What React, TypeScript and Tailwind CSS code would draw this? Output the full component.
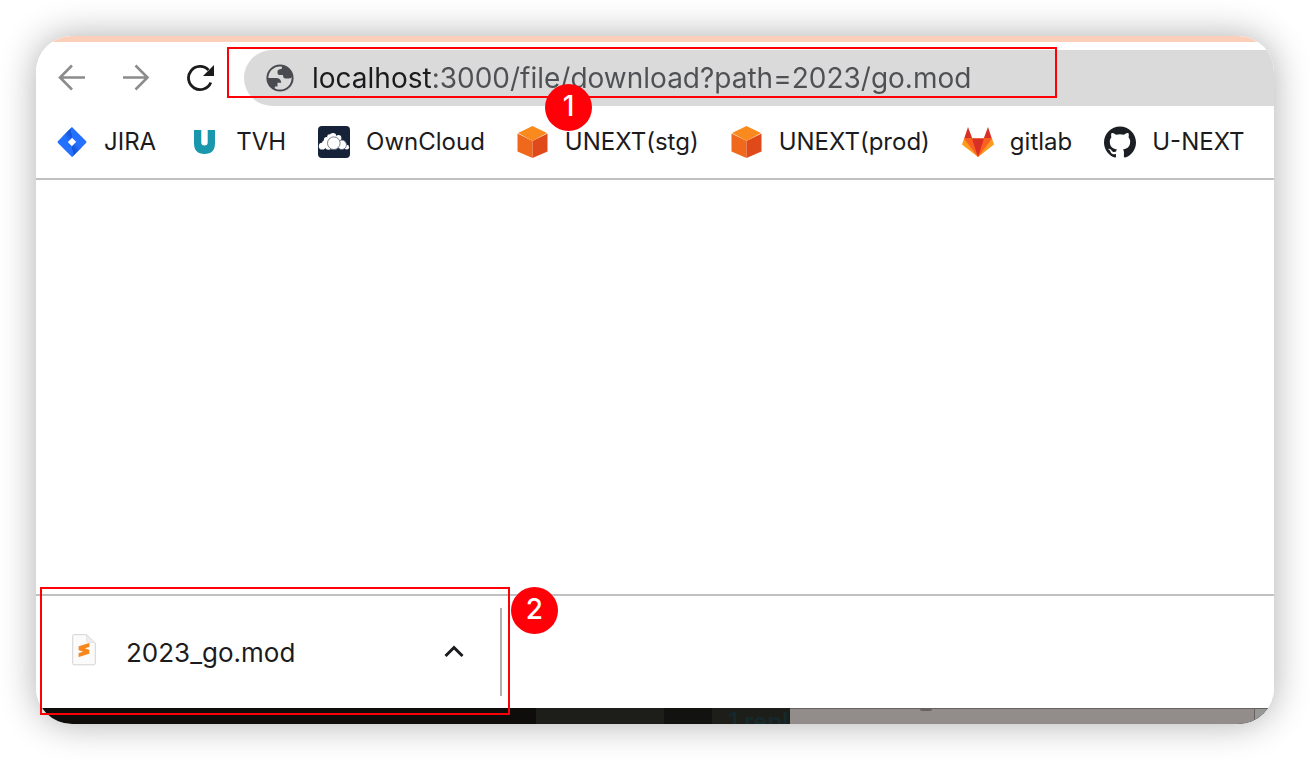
import { SiGithub, SiSublimetext } from "react-icons/si";

const bookmarks = [
  { name: "JIRA", icon: <JiraIcon /> },
  { name: "TVH", icon: <TvhIcon /> },
  { name: "OwnCloud", icon: <OwnCloudIcon /> },
  { name: "UNEXT(stg)", icon: <CubeIcon /> },
  { name: "UNEXT(prod)", icon: <CubeIcon /> },
  { name: "gitlab", icon: <GitlabIcon /> },
  { name: "U-NEXT", icon: <SiGithub size={32} color="#1b1f24" aria-hidden="true" /> },
];

function JiraIcon() {
  return (
    <svg width="32" height="32" viewBox="0 0 32 32" aria-hidden="true">
      <defs>
        <linearGradient id="jiraTop" x1="16" y1="7" x2="8" y2="13" gradientUnits="userSpaceOnUse">
          <stop offset="0.1" stopColor="#1450cf" />
          <stop offset="0.8" stopColor="#2470ff" />
        </linearGradient>
        <linearGradient id="jiraBottom" x1="16" y1="25" x2="24" y2="19" gradientUnits="userSpaceOnUse">
          <stop offset="0.1" stopColor="#1450cf" />
          <stop offset="0.8" stopColor="#2470ff" />
        </linearGradient>
      </defs>
      <path d="M16 1 30 15q1 1 0 2L16 31 2 17q-1-1 0-2ZM16 11.700 11.700 16l4.300 4.300 4.300-4.300Z" fill="#2470ff" fillRule="evenodd" />
      <path d="M16 1q-3 4 0 8v2.700L11.700 16 6.500 10.500Z" fill="url(#jiraTop)" />
      <path d="M16 31q3-4 0-8v-2.700l4.300-4.300 5.200 5.500Z" fill="url(#jiraBottom)" />
    </svg>
  );
}

function TvhIcon() {
  return (
    <svg width="32" height="32" viewBox="0 0 32 32" aria-hidden="true">
      <path d="M6 4h7.300v12.500q0 3 3.200 3t3.200-3V4H27v13q0 11-10.500 11T6 17Z" fill="#1998ad" />
    </svg>
  );
}

function OwnCloudIcon() {
  return (
    <svg width="32" height="32" viewBox="0 0 32 32" aria-hidden="true">
      <rect width="32" height="32" rx="4" fill="#152238" />
      <g fill="#fff">
        <circle cx="8.600" cy="13.800" r="2.700" />
        <circle cx="11.500" cy="10.500" r="2.300" />
        <circle cx="15" cy="10.200" r="3.200" />
        <circle cx="20.500" cy="12" r="2.900" />
        <circle cx="4.200" cy="20.200" r="3.400" />
        <circle cx="7.500" cy="17.500" r="3.500" />
        <circle cx="28.700" cy="21.200" r="2.400" />
        <circle cx="10.500" cy="20" r="3.700" />
      </g>
      <g fill="#fff" stroke="#5b6577" strokeWidth="0.800">
        <circle cx="23.800" cy="18.800" r="4.700" />
        <circle cx="15.800" cy="17.200" r="6.300" />
      </g>
    </svg>
  );
}

function CubeIcon() {
  return (
    <svg width="32" height="32" viewBox="0 0 32 32" aria-hidden="true">
      <path d="M15.500 0 30 7 15.500 15 1 7Z" fill="#fb8a1e" />
      <path d="M.500 7.500 15.500 15V32L.500 25.500Z" fill="#f0681c" />
      <path d="M30.500 7.500 15.500 15V32l15-6.500Z" fill="#e04a1a" />
    </svg>
  );
}

function GitlabIcon() {
  return (
    <svg width="32" height="32" viewBox="0 0 32 32" aria-hidden="true">
      <path d="M6 1 10.500 13H2Z M26 1 30 13H21.500Z" fill="#d93025" />
      <path d="M2 12.500 0 18.500 16 31 32 18.500 30 12.500Z" fill="#fc9a20" />
      <path d="M2 12.500H30L16 31Z" fill="#fc6020" />
      <path d="M10 12.500H22L16 31Z" fill="#d93025" />
    </svg>
  );
}

function GlobeIcon() {
  return (
    <svg width="28" height="28" viewBox="0 0 28 28" aria-hidden="true">
      <circle cx="14" cy="14" r="12.600" fill="none" stroke="#4a4b50" strokeWidth="2" />
      <path d="M1.500 14H10q5 0 5.200 4.800H11.500v3.700H8.800v3Q2 22.500 1.500 14Z" fill="#4a4b50" />
      <path d="M16.500 1.500Q25 3 26.300 11.500q-.500 3-3.300 3H19.500q-2.500 0-2.500-3.500h-3.500Q11.500 11 11.500 9V7.500q0-2.500 4-2.500Z" fill="#4a4b50" />
    </svg>
  );
}

function FileIcon() {
  return (
    <svg width="24" height="32" viewBox="0 0 24 32" aria-hidden="true">
      <path d="M1.500.7H14.500L23.300 9V29.500q0 1.300-1.500 1.300H2Q.700 30.800.700 29.500V2Q.700.700 1.500.700Z" fill="#fbfbfb" stroke="#d3d3d3" />
      <path d="M14.500 1v5.500q0 2 2 2H23Z" fill="#ececec" stroke="#d8d8d8" strokeWidth="0.500" />
      <SiSublimetext x="5" y="9" size={14} color="#f7861c" />
    </svg>
  );
}

const nav = "flex h-10 w-8 items-center justify-center";
const badge = "absolute flex size-[47px] items-center justify-center rounded-full bg-[#ff0008] pb-1 text-[28px] font-medium text-white";

export default function App() {
  return (
    <div className="flex min-h-screen bg-white p-9 font-['Inter',sans-serif] text-[#1b1b1d]">
      <div className="relative flex min-w-0 grow rounded-[36px] shadow-[0_0_36px_rgba(0,0,0,0.32)]">
        <div className="flex min-w-0 grow flex-col overflow-hidden rounded-[36px] bg-white">
          <div className="h-[6px] shrink-0 bg-[#fbcfba]" />
          <header className="shrink-0 border-b-2 border-[#c0c0c0]">
            <div className="flex items-center pt-2 pl-5">
              <nav className="flex gap-8" aria-label="History">
                <button type="button" aria-label="Back" className={nav}>
                  <svg width="28" height="28" viewBox="0 0 28 28" fill="none" stroke="#8c8c8c" strokeWidth="2.600">
                    <path d="M27 13.500H3M14 1.500 2 13.500l12 12" />
                  </svg>
                </button>
                <button type="button" aria-label="Forward" className={nav}>
                  <svg width="28" height="28" viewBox="0 0 28 28" fill="none" stroke="#8c8c8c" strokeWidth="2.600">
                    <path d="M1 13.500h24M13.500 1.500l12 12-12 12" />
                  </svg>
                </button>
                <button type="button" aria-label="Reload" className={nav}>
                  <svg width="28" height="28" viewBox="0 0 28 28" aria-hidden="true">
                    <path d="M24.800 18.500A11.600 11.600 0 1 1 22.500 6" fill="none" stroke="#1b1b1d" strokeWidth="2.800" />
                    <path d="M28 1V12H17Z" fill="#1b1b1d" />
                  </svg>
                </button>
              </nav>
              <label className="ml-7 flex h-14 grow items-center gap-[18px] rounded-l-full bg-[#dadada] pl-[22px]">
                <GlobeIcon />
                <input
                  type="text"
                  aria-label="Address"
                  defaultValue="localhost:3000/file/download?path=2023/go.mod"
                  className="h-14 min-w-0 grow bg-[linear-gradient(90deg,#1b1b1d_120px,#4f5054_120px)] bg-clip-text text-[28px] text-transparent outline-none"
                />
              </label>
            </div>
            <ul className="flex h-[72px] items-center gap-8 pl-5 text-[24px] whitespace-nowrap">
              {bookmarks.map((b) => (
                <li key={b.name}>
                  <a href="#" className="flex items-center gap-4">
                    {b.icon}
                    {b.name}
                  </a>
                </li>
              ))}
            </ul>
          </header>
          <main className="grow" />
          <footer className="shrink-0">
            <div className="flex h-[114px] items-center border-t-2 border-[#c0c0c0]">
              <div className="flex h-[88px] w-[466px] items-center border-r-2 border-[#b0b0b0] pr-[30px] pl-9">
                <div className="pb-1">
                  <FileIcon />
                </div>
                <a href="#" className="ml-[30px] grow text-[26px]">2023_go.mod</a>
                <button type="button" aria-label="Download options" className="flex size-8 items-center justify-center">
                  <svg width="20" height="14" viewBox="0 0 20 14" fill="none" stroke="#1b1b1d" strokeWidth="3">
                    <path d="M1.500 11 10 2.500 18.500 11" />
                  </svg>
                </button>
              </div>
            </div>
            <div className="flex h-4 overflow-hidden bg-[#0e0d0c]">
              <div className="w-[500px]" />
              <div className="flex w-[254px] justify-end bg-[#1d1e19]">
                <div className="w-12 bg-[#121310]" />
                <div className="w-[78px] overflow-hidden pl-4 text-[24px] leading-7 font-semibold whitespace-nowrap text-[#15292c]">1 repl</div>
              </div>
              <div className="flex grow border-t border-[#666260] bg-[#928d8b] pl-[130px]">
                <div className="h-[2px] w-3 rounded-b-full bg-[#666260]" />
              </div>
              <div className="w-5 border-t border-l border-[#666260] bg-[#979797]" />
            </div>
          </footer>
        </div>
        <div className="pointer-events-none absolute top-[11px] left-[191px] h-[51px] w-[830px] border-2 border-[#ff0008]" />
        <div className="pointer-events-none absolute bottom-[9px] left-1 h-32 w-[470px] border-2 border-[#ff0008]" />
        <div className={`${badge} top-12 left-[509px]`}>1</div>
        <div className={`${badge} bottom-[90px] left-[475px]`}>2</div>
      </div>
    </div>
  );
}
